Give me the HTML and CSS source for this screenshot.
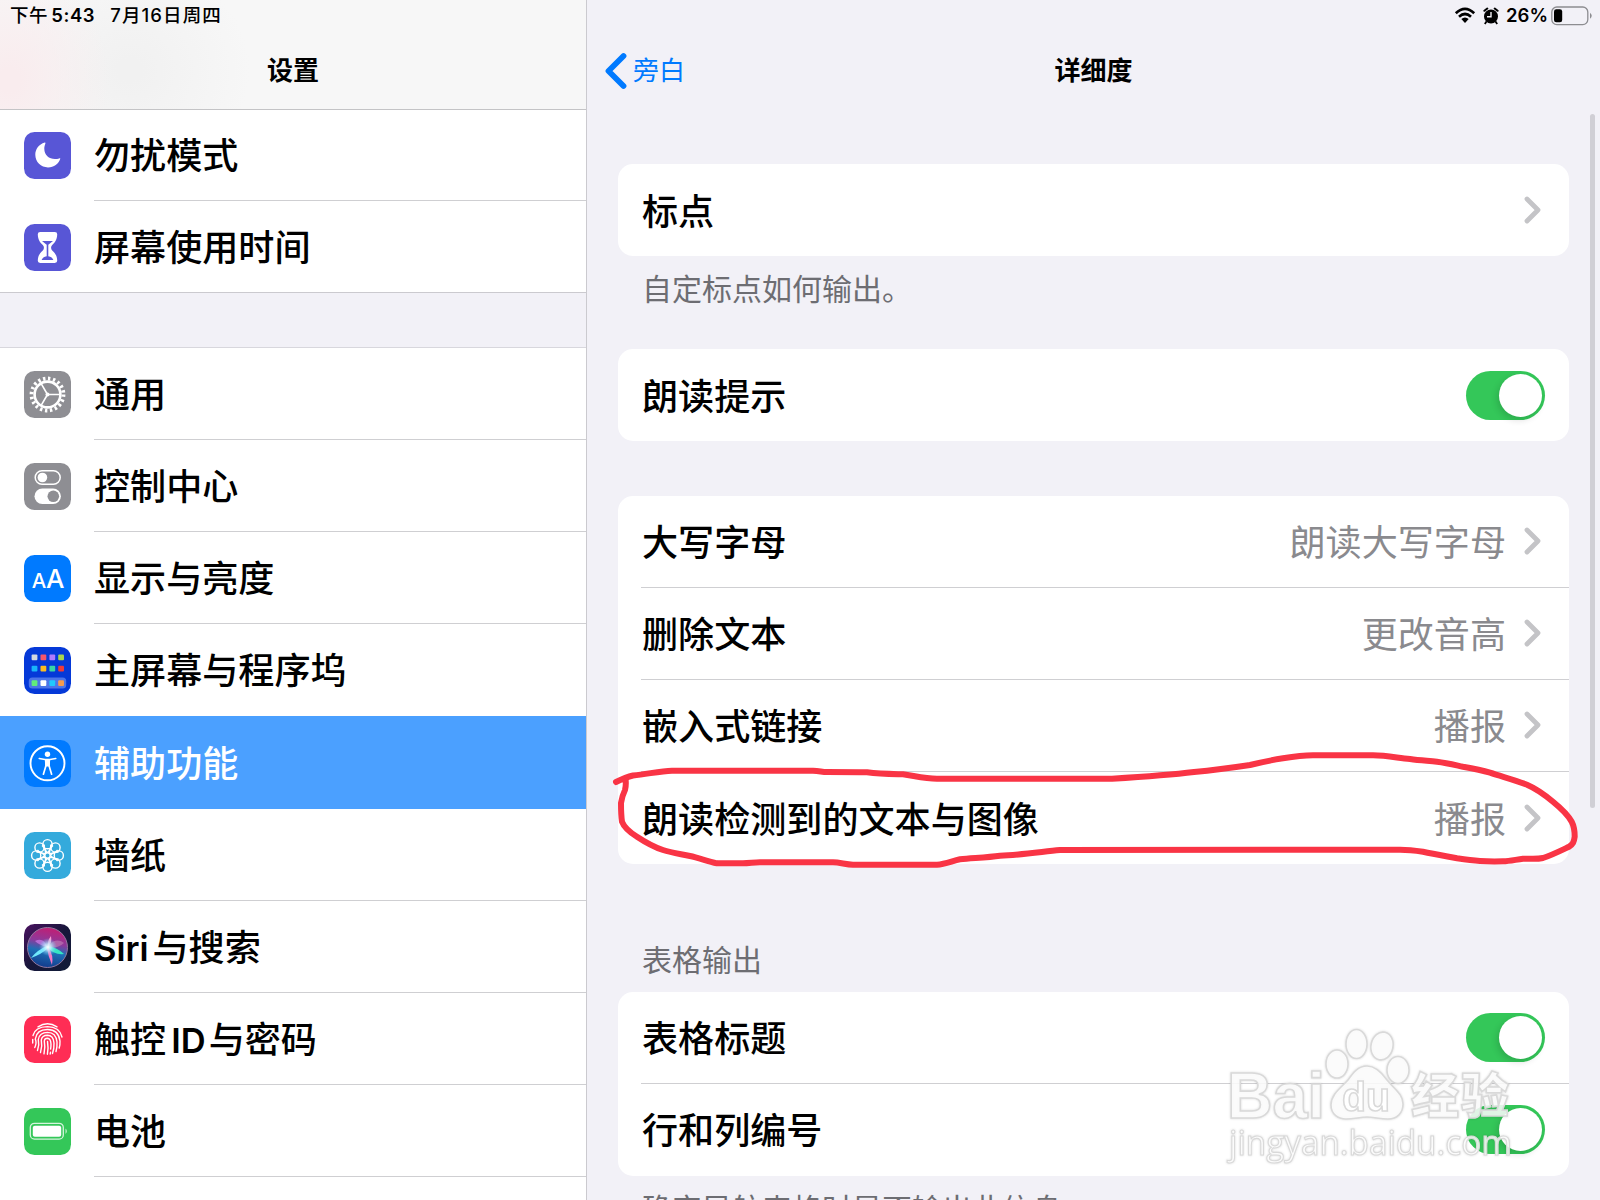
FILE: index.html
```html
<!DOCTYPE html>
<html lang="zh-CN">
<head>
  <meta charset="UTF-8" />
  <meta name="viewport" content="width=device-width, initial-scale=1.0" />
  <title>设置</title>
  <link rel="stylesheet" href="styles.css">
</head>
<body>
  <div class="screen">
    <!-- Left column: settings list -->
    <aside class="sidebar">
      <header class="sidebar-header">
        <div class="status"><span>下午<span class="time">5:43</span></span><span class="date">7月16日周四</span></div>
        <h1 class="title">设置</h1>
      </header>

      <ul class="menu menu-top">
        <li class="item">
          <svg class="icon" viewBox="0 0 47 47"><rect width="47" height="47" rx="10.5" fill="#5856d6"/><path d="M20.8 10.5C14.600 12.300 11.300 17.500 11.300 22.800C11.300 30 17 35.400 24 35.400C29.900 35.400 34.700 32 36.300 26.800C36.200 26.200 35.700 26.200 35.200 26.400C27.300 28.600 20.300 24.600 20.300 16.700C20.300 14.600 20.800 13 21.400 11.400C21.600 10.800 21.400 10.400 20.800 10.500Z" fill="#fff"/></svg>
          <span class="label">勿扰模式</span>
        </li>
        <li class="item">
          <svg class="icon" viewBox="0 0 47 47"><rect width="47" height="47" rx="10.500" fill="#5856d6"/><path d="M16.200 8H30.800Q33.400 8 33.200 10.600C33 16 31 18.500 28.200 21C26.700 22.500 26.700 25 28.200 26.500C31 29 33 31.500 33.200 36.500Q33.400 39 30.800 39H16.200Q13.600 39 13.800 36.500C14 31.500 16 29 18.800 26.500C20.300 25 20.300 22.500 18.800 21C16 18.500 14 16 13.800 10.600Q13.600 8 16.200 8Z" fill="#fff"/><path d="M18 17H29L24.300 20.800V32.300C27 33 28.700 34 29.400 36H17.600C18.300 34 20 33 22.700 32.300V20.800Z" fill="#5856d6"/></svg>
          <span class="label">屏幕使用时间</span>
        </li>
      </ul>

      <ul class="menu menu-main">
        <li class="item">
          <svg class="icon" viewBox="0 0 47 47"><rect width="47" height="47" rx="10.500" fill="#8e8e93"/><g fill="none" stroke="#fff"><circle cx="23.500" cy="23.500" r="16" stroke-width="3.800" stroke-dasharray="2.400 2.627"/><circle cx="23.500" cy="23.500" r="12.900" stroke-width="2.600"/><path d="M23.500 23.500H36M23.500 23.500L17.300 12.800M23.500 23.500L17.300 34.200" stroke-width="1.600"/></g><circle cx="23.500" cy="23.500" r="2" fill="#fff"/></svg>
          <span class="label">通用</span>
        </li>
        <li class="item">
          <svg class="icon" viewBox="0 0 47 47"><rect width="47" height="47" rx="10.500" fill="#8e8e93"/><rect x="11.200" y="7.700" width="25" height="13.600" rx="6.800" fill="none" stroke="#fff" stroke-width="1.500"/><circle cx="18.400" cy="14.500" r="4.800" fill="#fff"/><rect x="10.500" y="25.500" width="26.400" height="15.600" rx="7.800" fill="#fff"/><circle cx="29.300" cy="33.300" r="5.800" fill="#8e8e93"/></svg>
          <span class="label">控制中心</span>
        </li>
        <li class="item">
          <svg class="icon" viewBox="0 0 47 47"><rect width="47" height="47" rx="10.500" fill="#007aff"/><text x="7.700" y="33.200" class="aa" font-size="20.500">A</text><text x="22" y="33.200" class="aa" font-size="26">A</text></svg>
          <span class="label">显示与亮度</span>
        </li>
        <li class="item before-selected">
          <svg class="icon" viewBox="0 0 47 47"><rect width="47" height="47" rx="10.500" fill="#0539d8"/><rect x="4.800" y="30.500" width="37.400" height="11" rx="3.500" fill="#4c75e8"/>
            <rect x="7.600" y="7.500" width="5.800" height="5.800" rx="1" fill="#d5d8e0"/><rect x="16.500" y="7.500" width="5.800" height="5.800" rx="1" fill="#f4566a"/><rect x="25.400" y="7.500" width="5.800" height="5.800" rx="1" fill="#b07aff"/><rect x="34.200" y="7.500" width="5.800" height="5.800" rx="1" fill="#a9d64e"/>
            <rect x="7.600" y="18.700" width="5.800" height="5.800" rx="1" fill="#18b5fb"/><rect x="16.500" y="18.700" width="5.800" height="5.800" rx="1" fill="#fdbd20"/><rect x="25.400" y="18.700" width="5.800" height="5.800" rx="1" fill="#38d6a5"/><rect x="34.200" y="18.700" width="5.800" height="5.800" rx="1" fill="#ee3b3a"/>
            <rect x="7.600" y="33.200" width="5.800" height="5.800" rx="1" fill="#61ec7b"/><rect x="16.500" y="33.200" width="5.800" height="5.800" rx="1" fill="#fff"/><rect x="25.400" y="33.200" width="5.800" height="5.800" rx="1" fill="#1fc8fd"/><rect x="34.200" y="33.200" width="5.800" height="5.800" rx="1" fill="#f69b4e"/></svg>
          <span class="label">主屏幕与程序坞</span>
        </li>
        <li class="item selected">
          <svg class="icon" viewBox="0 0 47 47"><rect width="47" height="47" rx="10.500" fill="#007aff"/><circle cx="23.500" cy="23.300" r="17" fill="none" stroke="#fff" stroke-width="1.900"/><circle cx="23.500" cy="14.200" r="2.700" fill="#fff"/><path d="M15.300 18.500L21 19.500H26L31.700 18.500M22 20.500V25.500L19.400 34.200M25 20.500V25.500L27.600 34.200" fill="none" stroke="#fff" stroke-width="1.700" stroke-linecap="round" stroke-linejoin="round"/><path d="M20.800 19H26.200L25.800 26.500H21.200Z" fill="#fff"/></svg>
          <span class="label">辅助功能</span>
        </li>
        <li class="item">
          <svg class="icon" viewBox="0 0 47 47"><rect width="47" height="47" rx="10.500" fill="#34aadc"/><g fill="none" stroke="#fff" stroke-width="1.400"><circle cx="23.500" cy="12.200" r="4.600"/><circle cx="31.500" cy="15.500" r="4.600"/><circle cx="34.800" cy="23.500" r="4.600"/><circle cx="31.500" cy="31.500" r="4.600"/><circle cx="23.500" cy="34.800" r="4.600"/><circle cx="15.500" cy="31.500" r="4.600"/><circle cx="12.200" cy="23.500" r="4.600"/><circle cx="15.500" cy="15.500" r="4.600"/><circle cx="23.500" cy="23.500" r="2.700"/>
            <path id="petal" d="M23.500 20.800C20.400 18 20 15.500 20.200 12.500M23.500 20.800C26.600 18 27 15.500 26.800 12.500"/><use href="#petal" transform="rotate(45 23.500 23.500)"/><use href="#petal" transform="rotate(90 23.500 23.500)"/><use href="#petal" transform="rotate(135 23.500 23.500)"/><use href="#petal" transform="rotate(180 23.500 23.500)"/><use href="#petal" transform="rotate(225 23.500 23.500)"/><use href="#petal" transform="rotate(270 23.500 23.500)"/><use href="#petal" transform="rotate(315 23.500 23.500)"/></g></svg>
          <span class="label">墙纸</span>
        </li>
        <li class="item">
          <svg class="icon" viewBox="0 0 47 47">
            <defs>
              <linearGradient id="siriBg" x1="0" y1="0" x2="1" y2="1"><stop offset="0" stop-color="#4a1260"/><stop offset=".5" stop-color="#17163a"/><stop offset="1" stop-color="#101c38"/></linearGradient>
              <linearGradient id="siriOrb" x1=".6" y1="0" x2=".4" y2="1"><stop offset="0" stop-color="#c41d72"/><stop offset=".38" stop-color="#8b3a9c"/><stop offset=".6" stop-color="#1d6fb5"/><stop offset="1" stop-color="#123a8c"/></linearGradient>
              <radialGradient id="siriGlow"><stop offset="0" stop-color="#fff"/><stop offset=".35" stop-color="#c9f2ff" stop-opacity=".8"/><stop offset="1" stop-color="#6cf" stop-opacity="0"/></radialGradient>
            </defs>
            <rect width="47" height="47" rx="10.500" fill="url(#siriBg)"/><circle cx="23.500" cy="23.500" r="20" fill="url(#siriOrb)" stroke="#93789f" stroke-width="1"/>
            <path d="M23 23Q20 13 11 17Q15 21 23 23Z" fill="#c57be4" opacity=".75"/><path d="M24 23Q23 17 27 12Q28 18 25 23Z" fill="#ff9bd0"/><path d="M24 22Q32 13 40 19Q35 24 25 24Z" fill="#b66fae" opacity=".8"/><path d="M24 22Q34 24 40 30Q30 31 24 24Z" fill="#35e6c3"/><path d="M23 22Q13 26 7 34Q18 30 24 24Z" fill="#70e8fb"/><path d="M24 23Q30 31 28 41Q24 32 23 24Z" fill="#f377c5"/>
            <circle cx="24" cy="23" r="9" fill="url(#siriGlow)"/></svg>
          <span class="label"><span class="latin">Siri</span>与搜索</span>
        </li>
        <li class="item">
          <svg class="icon" viewBox="0 0 47 47"><rect width="47" height="47" rx="10.500" fill="#ff2d55"/><g fill="none" stroke="#fff" stroke-width="1.400" stroke-linecap="round"><path d="M14 10.800Q23.500 4.800 33 10.800"/><path d="M9 19.500Q11 10.800 23.500 10.600Q35.500 10.800 38 21"/><path d="M8.700 27V23.500M10.800 31.500Q13 27 11.300 23Q12.500 13.600 23.500 13.500Q34.500 13.600 36 25Q36.200 29 35.200 32"/><path d="M13.500 34.500Q15.500 29 14.300 23.500Q15.500 16.500 23.500 16.400Q32 16.500 33 26Q33.300 31 32 35.500"/><path d="M16.500 36.500Q18.500 30 17.300 24Q18 19.400 23.500 19.300Q29.500 19.500 30 27Q30.200 33 28.500 37.500"/><path d="M20 37.800Q21.500 31 20.300 25Q20.500 22.200 23.500 22.200Q26.700 22.400 27 28Q27 31 26.600 33"/><path d="M23.500 25.500Q24.600 31.500 23.400 38.200M26.500 36.300L26.200 38"/></g></svg>
          <span class="label">触控<span class="latin id">ID</span>与密码</span>
        </li>
        <li class="item">
          <svg class="icon" viewBox="0 0 47 47"><rect width="47" height="47" rx="10.500" fill="#34c759"/><rect x="6.300" y="15.300" width="33" height="15.800" rx="4.200" fill="none" stroke="#d5f4dd" stroke-width="1.300"/><rect x="8.800" y="17.700" width="28.400" height="11" rx="2" fill="#fff"/><path d="M41.500 20.500Q44.300 23.200 41.500 25.900Z" fill="#c5efcf"/></svg>
          <span class="label">电池</span>
        </li>
        <li class="item"></li>
      </ul>
    </aside>

    <!-- Right column: detail page -->
    <main class="detail">
      <div class="status status-right">
        <svg width="22" height="17" viewBox="0 0 22 17"><path d="M1.800 6.200Q11-2.300 20.200 6.200M5 9.700Q11 4.300 17 9.700" fill="none" stroke="#000" stroke-width="2.700"/><path d="M7.300 12Q11 9 14.700 12L11 16Z"/></svg>
        <svg class="alarm" width="16" height="18" viewBox="0 0 16 18"><circle cx="8" cy="9.500" r="7"/><path d="M1.400 3.800L4.300 1.500M14.600 3.800L11.700 1.500" stroke="#000" stroke-width="2" stroke-linecap="round"/><path d="M3.500 14.500L1.800 17M12.500 14.500L14.200 17" stroke="#000" stroke-width="1.800"/><path d="M8 5V9.800H4" fill="none" stroke="#f2f1f7" stroke-width="1.400"/></svg>
        <span class="percent">26%</span>
        <svg class="battery" width="42" height="20" viewBox="0 0 42 20"><rect x=".8" y="1" width="36" height="17.600" rx="5" fill="none" stroke="#8d8d91" stroke-width="1.300"/><rect x="3" y="3.300" width="8.200" height="13" rx="2.300"/><path d="M39 6.800Q42.500 9.800 39 12.800Z" fill="#8d8d91"/></svg>
      </div>
      <nav class="navbar">
        <a class="back"><svg width="22" height="38" viewBox="0 0 22 38"><path d="M18.500 4L3.500 19L18.500 34" fill="none" stroke="#007aff" stroke-width="5.800" stroke-linecap="round" stroke-linejoin="round"/></svg><span>旁白</span></a>
        <h2 class="title">详细度</h2>
      </nav>

      <section class="card card-first">
        <div class="row"><span>标点</span><svg class="chevron" viewBox="0 0 18 28"><path d="M3 3L14 14L3 25"/></svg></div>
      </section>
      <p class="note">自定标点如何输出。</p>

      <section class="card card-hints">
        <div class="row"><span>朗读提示</span><i class="toggle"></i></div>
      </section>

      <section class="card card-speech">
        <div class="row"><span>大写字母</span><span class="value">朗读大写字母</span><svg class="chevron" viewBox="0 0 18 28"><path d="M3 3L14 14L3 25"/></svg></div>
        <div class="row"><span>删除文本</span><span class="value">更改音高</span><svg class="chevron" viewBox="0 0 18 28"><path d="M3 3L14 14L3 25"/></svg></div>
        <div class="row"><span>嵌入式链接</span><span class="value">播报</span><svg class="chevron" viewBox="0 0 18 28"><path d="M3 3L14 14L3 25"/></svg></div>
        <div class="row"><span>朗读检测到的文本与图像</span><span class="value">播报</span><svg class="chevron" viewBox="0 0 18 28"><path d="M3 3L14 14L3 25"/></svg></div>
      </section>

      <h3 class="section-title">表格输出</h3>
      <section class="card">
        <div class="row"><span>表格标题</span><i class="toggle"></i></div>
        <div class="row"><span>行和列编号</span><i class="toggle"></i></div>
      </section>
      <p class="note">确定导航表格时是否输出此信息。</p>
    </main>

    <div class="scrollbar"></div>

    <!-- Hand drawn marker and watermark on top of the page -->
    <svg class="overlay" viewBox="0 0 1600 1200">
      <path class="marker" d="M616 782C620 780 626 777 633 775.500C648 774 660 771 672 770.700H813C820 771 822 772 827 772C842 772 855 772 867 772.300C880 774 890 774 903 774.300C915 776 925 778.700 937 778.700H1112C1140 777 1170 775 1194 772C1215 770 1230 768 1250 765C1262 762 1272 760 1283 758.300C1294 756.500 1303 755.300 1313 755.300H1373C1387 755.300 1398 758 1410 759C1420 760.500 1428 760.700 1437 761.700C1447 763 1455 765 1463 766.700C1473 768.500 1481 770 1490 772.700C1503 777 1515 780 1527 784.700C1537 789 1545 795 1553 801.700C1562 809 1568 815 1571.700 821.700C1574.500 827 1574.700 832 1574.700 836.700C1574 842 1573 844 1569 846.700C1560 851 1552 855 1543 858C1536 859.500 1530 858.500 1523 858.700C1516 859.500 1510 861.300 1503 861.300C1495 861.500 1488 861.500 1480 861C1472 860.500 1465 859.500 1457 858.300C1445 856 1434 854 1423 851.700C1415 850.500 1408 849.700 1400 849.700L1060 850C1040 852 1020 855 1000 855.700C987 857.500 973 858 960 859.300C952 861 945 864.500 937 864.700H853C846 864.500 840 862.500 833 862.300H760C754 862.300 749 863.300 743 863.300H717C707 861 699 858 690 856C681 854 672 853 663 850C654 847 645 842 637 836.700C631 833 624 827 622 821.700C621 815 621 809 621 803C622 797 623 794 625 790C626 786 626 782 625.500 778"/>
      <g class="watermark">
        <text x="1227" y="1118" font-size="65" font-weight="700" textLength="98" lengthAdjust="spacingAndGlyphs">Bai</text>
        <ellipse cx="1337" cy="1064" rx="11" ry="14"/><ellipse cx="1356.500" cy="1044" rx="10.500" ry="14.500"/><ellipse cx="1382" cy="1046" rx="11" ry="14" transform="rotate(12 1382 1046)"/><ellipse cx="1398" cy="1070" rx="11" ry="13.500"/>
        <path d="M1367 1066C1358 1066 1353 1073 1348 1080C1342 1087 1331 1094 1331 1105C1331 1114 1338 1119 1346 1119C1354 1119 1360 1117 1367 1117C1374 1117 1380 1119 1388 1119C1397 1119 1403 1113 1403 1104C1403 1094 1394 1089 1387 1080C1382 1073 1376 1066 1367 1066Z"/>
        <text x="1342" y="1111" font-size="40" font-weight="700" textLength="48" lengthAdjust="spacingAndGlyphs">du</text>
        <text x="1411" y="1113" font-size="48" font-weight="900" class="cjk" textLength="98">经验</text>
        <text x="1229" y="1155" font-size="34" class="url" textLength="283" lengthAdjust="spacingAndGlyphs">jingyan.baidu.com</text>
      </g>
    </svg>
  </div>
</body>
</html>
```
FILE: styles.css
```css
* {
  box-sizing: border-box;
}
body {
  margin: 0;
  font-family: Inter, "Noto Sans CJK SC", sans-serif;
  font-weight: 500;
  color: #000;
  background-color: #f2f1f7;
}
h1, h2, h3, p, ul {
  margin: 0;
  padding: 0;
}
svg {
  flex: none;
}
.screen {
  position: relative;
  display: flex;
  width: 1600px;
  height: 1200px;
  overflow: hidden;
}

/* status bar */
.status {
  display: flex;
  gap: 15px;
  height: 31px;
  padding-left: 10px;
  font-size: 18.5px;
  line-height: 31px;
  letter-spacing: 0.6px;
}
.time {
  margin-left: 3px;
  font-weight: 600;
}
.date {
  letter-spacing: 1.1px;
}
.status-right {
  gap: 0;
  justify-content: flex-end;
  align-items: center;
  padding: 0 7px 0 0;
}
.alarm {
  margin-left: 7px;
}
.percent {
  margin: 0 3px 0 7px;
  font-weight: 600;
  letter-spacing: 0;
}

/* sidebar */
.sidebar {
  width: 587px;
  border-right: 1px solid #cbcacf;
  overflow: hidden;
}
.sidebar-header {
  height: 110px;
  border-bottom: 1px solid #c4c4c6;
  background:
    radial-gradient(ellipse 100px 120px at 10px 80px, #f9ecee 10%, rgba(249, 236, 238, 0) 100%),
    radial-gradient(ellipse 120px 110px at 130px 70px, #f1f1f1 10%, rgba(241, 241, 241, 0) 100%),
    #f7f7f7;
}
.title {
  font-size: 26px;
  font-weight: 600;
  line-height: 79px;
  text-align: center;
}
.menu {
  list-style: none;
  background-color: #fff;
}
.menu-top {
  border-bottom: 1px solid #cbcacf;
}
.menu-top .item {
  height: 91px;
}
.menu-main {
  margin-top: 54px;
  border-top: 1px solid #d8d7dd;
}
.item {
  display: flex;
  align-items: center;
  gap: 23.5px;
  height: 92.15px;
  padding-left: 23.5px;
}
.icon {
  width: 47px;
  height: 47px;
}
.menu-main .icon {
  margin-top: 1px;
}
.aa {
  fill: #fff;
  font-family: Inter, sans-serif;
  font-weight: 500;
}
.label {
  flex: 1;
  height: 100%;
  border-bottom: 1px solid #cfcfd2;
  font-size: 36.1px;
  line-height: 93px;
}
.menu-main .label {
  line-height: 95px;
}
.menu-top .item:last-child {
  padding-top: 2px;
}
.menu-top .item:last-child .label {
  border-bottom: none;
  line-height: 91px;
}
.latin {
  margin-right: 4px;
  font-size: 34.5px;
  font-weight: 600;
}
.id {
  margin-left: 5px;
  margin-right: 3px;
}
.before-selected .label {
  border-bottom-color: #4ba0ff;
}
.selected {
  background-color: #4ba0ff;
  color: #fff;
  box-shadow: 0 -1px #4ba0ff;
}
.selected .label {
  border-bottom-color: #4ba0ff;
}

/* detail */
.detail {
  flex: 1;
  padding-right: 31px;
}
.detail .status-right {
  margin-right: -31px;
}
.navbar {
  display: grid;
  grid-template-columns: 1fr 1fr 1fr;
  height: 79px;
  margin-right: -31px;
}
.back {
  display: flex;
  align-items: center;
  gap: 6px;
  padding-left: 18px;
  color: #007aff;
  font-size: 26px;
  font-weight: 400;
}
.back span {
  padding-bottom: 4px;
}
.card {
  margin-left: 31px;
  border-radius: 15px;
  background-color: #fff;
}
.card-first {
  margin-top: 54px;
}
.card-hints {
  margin-top: 28px;
}
.card-speech {
  margin-top: 54.5px;
}
.row {
  display: flex;
  align-items: center;
  height: 92.1px;
  margin-left: 23px;
  padding-right: 24px;
  border-bottom: 1px solid #cfcfd2;
  font-size: 36.1px;
}
.row:last-child {
  border-bottom: none;
}
.row span {
  padding: 0 0 3px 1px;
}
.value {
  margin-left: auto;
  color: #8a8a8e;
  font-weight: 400;
}
.chevron {
  width: 18px;
  height: 28px;
  margin-left: auto;
  margin-right: 3px;
  fill: none;
  stroke: #c4c4c7;
  stroke-width: 4.8;
  stroke-linecap: round;
  stroke-linejoin: round;
}
.value + .chevron {
  margin-left: 18px;
}
.note, .section-title {
  margin-left: 55px;
  color: #6d6d72;
  font-size: 30px;
  font-weight: 400;
  line-height: 44px;
}
.note {
  padding-top: 11px;
  height: 65px;
  white-space: nowrap;
}
.section-title {
  margin-top: 74px;
  height: 53.5px;
}
.toggle {
  display: flex;
  justify-content: flex-end;
  width: 79.5px;
  height: 49px;
  margin-left: auto;
  padding: 3px;
  border-radius: 25px;
  background-color: #34c759;
}
.toggle::after {
  content: "";
  width: 43px;
  height: 43px;
  border-radius: 50%;
  background-color: #fff;
  box-shadow: -2px 3px 7px rgba(0, 0, 0, 0.14);
}

/* floating things */
.scrollbar {
  position: absolute;
  top: 114px;
  right: 5px;
  width: 5px;
  height: 694px;
  border-radius: 3px;
  background-color: #d0cfd5;
}
.overlay {
  position: absolute;
  inset: 0;
  width: 1600px;
  height: 1200px;
  pointer-events: none;
}
.marker {
  fill: none;
  stroke: #f93445;
  stroke-width: 6;
  stroke-linecap: round;
  stroke-linejoin: round;
}
.watermark {
  fill: rgba(255, 255, 255, 0.85);
  stroke: #d9d9d9;
  stroke-width: 1.6;
  filter: drop-shadow(0 0 1px rgba(0, 0, 0, 0.15));
  font-family: "Liberation Sans", sans-serif;
}
.watermark .cjk {
  font-family: "Noto Sans CJK SC", sans-serif;
}
.watermark .url {
  stroke-width: 1.1;
  font-family: "Open Sans", "Noto Sans", sans-serif;
}
```
